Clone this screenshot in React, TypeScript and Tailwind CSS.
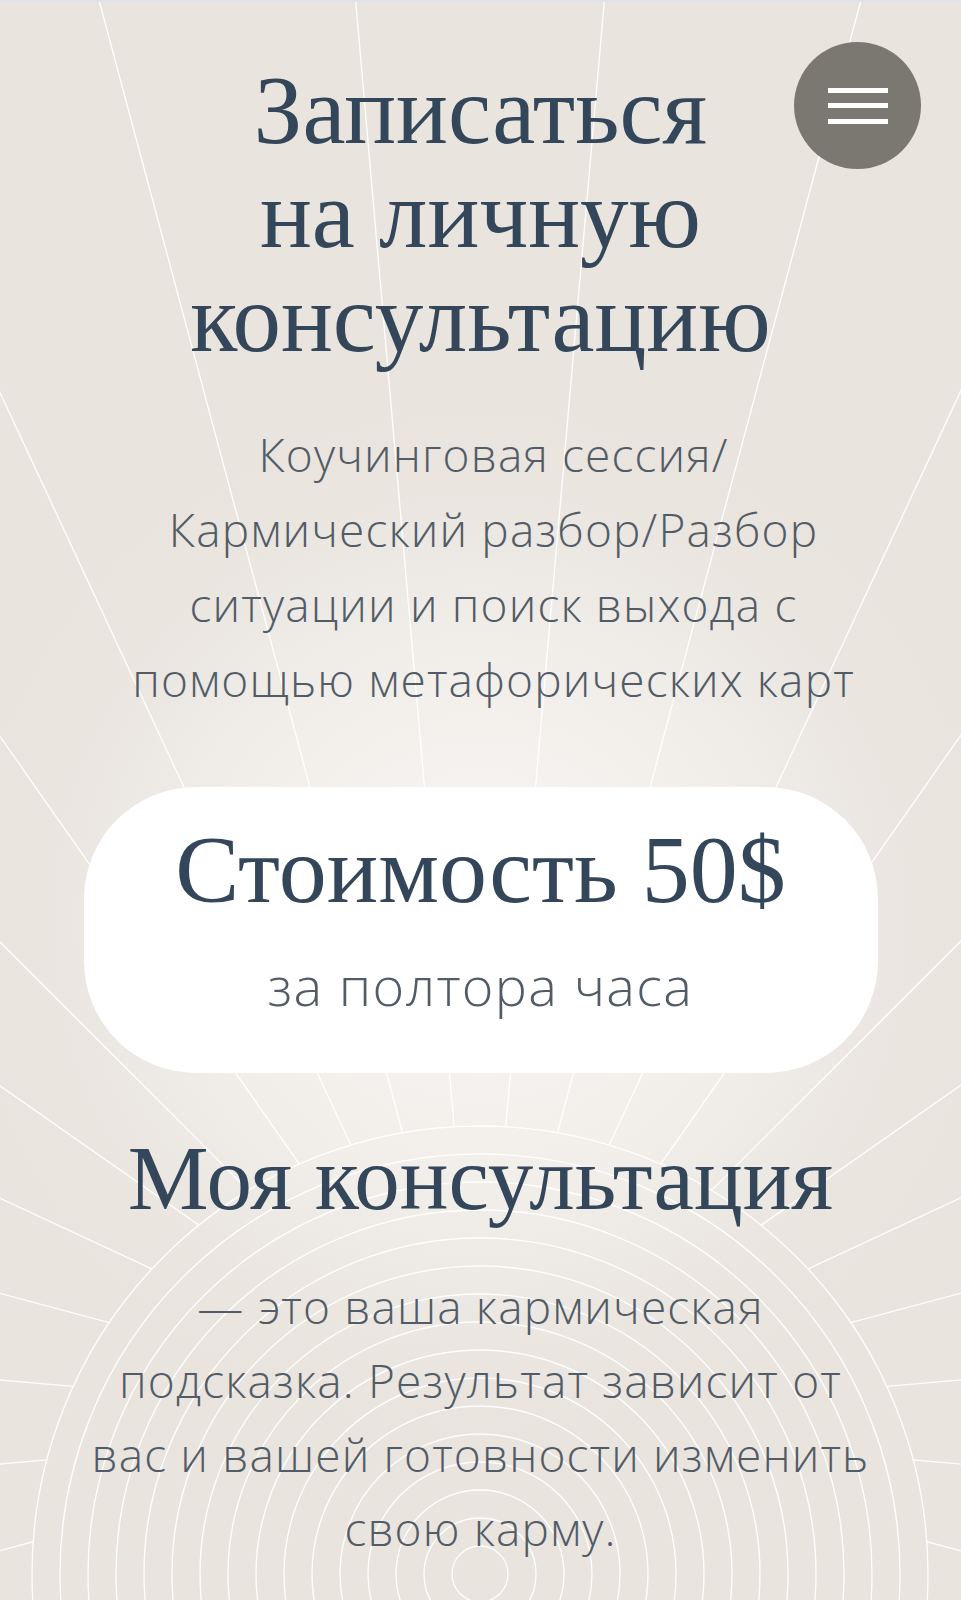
import React from "react"

const SERIF = "font-['Liberation_Serif','Times_New_Roman',serif]"
const SANS = "font-['Open_Sans','Noto_Sans',sans-serif] font-light tracking-[0.025em]"

// ray origin and arc centre, in page pixels
const RAY_X = 480
const RAY_Y = 1420
const ARC_Y = 1572
const ARC_R = 448

function rayStart(deg: number) {
  const a = (deg * Math.PI) / 180
  const c = Math.cos(a)
  const dy = RAY_Y - ARC_Y
  // solve |P0 + t*d - C| = R
  const b = -2 * dy * c
  const t = (-b + Math.sqrt(b * b - 4 * (dy * dy - ARC_R * ARC_R))) / 2
  return { x: RAY_X + t * Math.sin(a), y: RAY_Y - t * c }
}

function Backdrop() {
  const angles: number[] = []
  for (let d = -115; d <= 115; d += 10) angles.push(d)
  const radii: number[] = []
  for (let r = ARC_R; r > 20; r -= 28) radii.push(r)

  return (
    <svg
      className="pointer-events-none absolute left-0 top-0"
      width="961"
      height="1600"
      viewBox="0 0 961 1600"
    >
      <defs>
        <radialGradient id="glow" cx="480" cy="920" r="520" gradientUnits="userSpaceOnUse">
          <stop offset="0" stopColor="#f8f6f3" />
          <stop offset="0.55" stopColor="#f1eeea" />
          <stop offset="1" stopColor="#eae5df" stopOpacity="0" />
        </radialGradient>
      </defs>
      <rect x="0" y="0" width="961" height="1600" fill="url(#glow)" />
      <g stroke="#ffffff" strokeWidth="1.4" fill="none" opacity="0.95">
        {angles.map((d) => {
          const s = rayStart(d)
          const a = (d * Math.PI) / 180
          return (
            <line
              key={d}
              x1={s.x}
              y1={s.y}
              x2={RAY_X + 2400 * Math.sin(a)}
              y2={RAY_Y - 2400 * Math.cos(a)}
            />
          )
        })}
        {radii.map((r) => (
          <circle key={r} cx={RAY_X} cy={ARC_Y} r={r} />
        ))}
      </g>
    </svg>
  )
}

export default function App() {
  return (
    <div className="relative min-h-[1600px] w-full overflow-hidden border-t-2 border-[#dfe3ea] bg-[#e9e4de]">
      <Backdrop />

      <button
        aria-label="Меню"
        className="absolute right-[40px] top-[40px] z-10 flex h-[127px] w-[127px] flex-col items-center justify-center gap-[10.5px] rounded-full bg-[#7b7872]"
      >
        <span className="block h-[5px] w-[60px] bg-white" />
        <span className="block h-[5px] w-[60px] bg-white" />
        <span className="block h-[5px] w-[60px] bg-white" />
      </button>

      <main className="relative flex flex-col items-center pt-[57px] text-center">
        <h1 className={`${SERIF} text-[97px] font-normal leading-[104px] text-[#34475a]`}>
          Записаться
          <br />
          на личную
          <br />
          консультацию
        </h1>

        <p className={`${SANS} mt-[46px] pl-[26px] text-[46px] leading-[75px] text-[#525c67]`}>
          Коучинговая сессия/
          <br />
          Кармический разбор/Разбор
          <br />
          ситуации и поиск выхода с
          <br />
          помощью метафорических карт
        </p>

        <div className="mt-[70px] flex h-[286px] w-[794px] flex-col items-center rounded-[112px] bg-white pt-[31px]">
          <div className={`${SERIF} text-[96px] leading-[104px] text-[#34475a]`}>Стоимость 50$</div>
          <div className={`${SANS} mt-[26px] text-[54px] leading-[75px] text-[#525c67]`}>
            за полтора часа
          </div>
        </div>

        <h2 className={`${SERIF} mt-[56px] text-[91px] font-normal leading-[100px] text-[#34475a]`}>
          Моя консультация
        </h2>

        <p className={`${SANS} mt-[40px] text-[46px] leading-[74px] text-[#525c67]`}>
          — это ваша кармическая
          <br />
          подсказка. Результат зависит от
          <br />
          вас и вашей готовности изменить
          <br />
          свою карму.
        </p>
      </main>
    </div>
  )
}
